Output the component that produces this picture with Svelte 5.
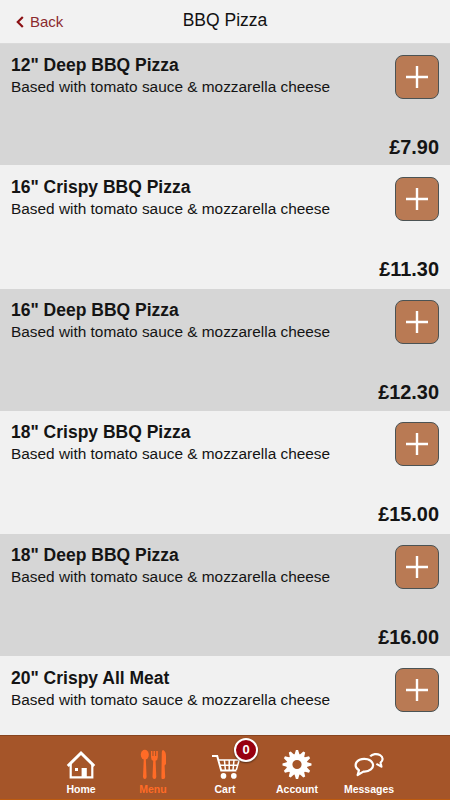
<script>
  const items = [
    { name: '12" Deep BBQ Pizza', price: "£7.90" },
    { name: '16" Crispy BBQ Pizza', price: "£11.30" },
    { name: '16" Deep BBQ Pizza', price: "£12.30" },
    { name: '18" Crispy BBQ Pizza', price: "£15.00" },
    { name: '18" Deep BBQ Pizza', price: "£16.00" },
    { name: '20" Crispy All Meat' },
  ];

  const description = "Based with tomato sauce & mozzarella cheese";

  const tabs = ["Home", "Menu", "Cart", "Account", "Messages"];
  const teeth = Array.from({ length: 12 }, (_, i) => i * 30);

  let active = "Menu";
  let cartCount = 0;
</script>

<div class="screen">
  <header>
    <button class="back">
      <svg width="8" height="12" viewBox="0 0 8 12">
        <path d="M6.8 1 L1.8 6 L6.8 11" fill="none" stroke="#8b1014" stroke-width="2.2" />
      </svg>
      <span>Back</span>
    </button>
    <h1>BBQ Pizza</h1>
  </header>

  <main>
    {#each items as item}
      <article>
        <div class="info">
          <h2>{item.name}</h2>
          <p>{description}</p>
        </div>
        <div class="buy">
          <button class="add" aria-label="Add">
            <svg width="42" height="42" viewBox="0 0 42 42">
              <path d="M10 21 H32 M21 10 V32" stroke="#fff" stroke-width="2.4" />
            </svg>
          </button>
          {#if item.price}
            <strong>{item.price}</strong>
          {/if}
        </div>
      </article>
    {/each}
  </main>

  <nav>
    {#each tabs as tab}
      <button class="tab" class:active={tab === active} on:click={() => (active = tab)}>
        <svg width="32" height="32" viewBox="0 0 32 32">
          {#if tab === "Home"}
            <path
              d="M2.8 17 L16 4 L29.2 17"
              fill="none"
              stroke="currentColor"
              stroke-width="3"
            />
            <path
              d="M5.7 14.5 V28.4 H27.3 V14.5"
              fill="none"
              stroke="currentColor"
              stroke-width="2.2"
            />
            <path d="M16.6 19 H21.8 V29 H16.6 Z M10 19 H13 V22 H10 Z" fill="currentColor" />
          {:else if tab === "Menu"}
            <g fill="currentColor">
              <ellipse cx="7.8" cy="5.8" rx="4" ry="5" />
              <path d="M6.8 9 H8.8 L9.6 28 Q9.4 30 7.8 30 Q6.2 30 6 28 Z" />
              <path d="M14 2 H15.4 V7 H16.5 V2 H18.1 V7 H19.2 V2 H20.8 V8.2 Q20.8 11 18.6 11.8 L19.3 28 Q19.2 30 17.4 30 Q15.6 30 15.5 28 L16.2 11.8 Q14 11 14 8.2 Z" />
              <path d="M25 30 Q24.4 30 24.4 28 L24.8 3 Q24.9 1 26.2 1 Q29 2.5 29 7 V15 L27.6 16.5 L28.2 28 Q28.2 30 26.4 30 Z" />
            </g>
          {:else if tab === "Cart"}
            <g fill="none" stroke="currentColor" stroke-width="1.5">
              <path d="M3 7 H8.2 L12.2 21.6 H27.4" stroke-width="2" />
              <path d="M9 11 H30.2 L27.3 21 M10.4 16.2 H28.7 M15.4 11 L16.4 21 M20.2 11 V21 M25 11 L24 21" />
            </g>
            <circle cx="14.5" cy="26.9" r="2.8" fill="currentColor" />
            <circle cx="24.8" cy="26.9" r="2.8" fill="currentColor" />
          {:else if tab === "Account"}
            <circle cx="16" cy="15.5" r="7.6" fill="none" stroke="currentColor" stroke-width="6" />
            {#each teeth as angle}
              <path
                d="M13.4 6 L14.9 1 H17.1 L18.6 6 Z"
                fill="currentColor"
                transform="rotate({angle} 16 15.5)"
              />
            {/each}
          {:else}
            <g fill="none" stroke="currentColor" stroke-width="2.2" stroke-linejoin="round">
              <path d="M6 21.3 A8.7 6.4 0 1 1 10.4 22.6 L4.6 26 Z" />
              <path d="M17.2 7.4 A6.7 5 0 1 1 27.6 13.6 L28.4 17.6 L23.4 14.9" />
            </g>
          {/if}
        </svg>
        {#if tab === "Cart"}
          <span class="badge">{cartCount}</span>
        {/if}
        <span class="label">{tab}</span>
      </button>
    {/each}
  </nav>
</div>

<style>
  :global(body) {
    margin: 0;
    font-family: "Liberation Sans", Arial, sans-serif;
  }

  .screen {
    width: 450px;
    height: 800px;
    display: flex;
    flex-direction: column;
    overflow: hidden;
    background: #f1f1f1;
    color: #141414;
  }

  button {
    appearance: none;
    border: 0;
    padding: 0;
    background: none;
    font-family: inherit;
    cursor: pointer;
  }

  svg {
    display: block;
  }

  header {
    flex: 0 0 43px;
    box-sizing: border-box;
    display: grid;
    grid-template-columns: 1fr auto 1fr;
    padding: 0 16px;
    border-bottom: 1px solid #dadada;
    background: #f2f2f2;
  }

  .back {
    display: flex;
    align-items: center;
    gap: 6px;
    height: 43px;
    font-size: 15px;
    color: #8b2a2e;
  }

  h1 {
    margin: 0;
    font-size: 17.5px;
    font-weight: 400;
    line-height: 40px;
    color: #111;
  }

  main {
    flex: 1 1 0;
    min-height: 0;
    overflow: hidden;
  }

  article {
    box-sizing: border-box;
    display: flex;
    justify-content: space-between;
    height: 123.8px;
    padding: 11.8px 11px 0;
    background: #f1f1f1;
  }

  article:nth-child(odd) {
    height: 121.4px;
    padding-top: 10.8px;
    background: #d6d6d6;
  }

  h2 {
    margin: 0;
    font-size: 17.5px;
    line-height: 21px;
    white-space: nowrap;
  }

  p {
    margin: 0;
    font-size: 15.4px;
    line-height: 22px;
    white-space: nowrap;
  }

  .buy {
    display: flex;
    flex-direction: column;
    align-items: flex-end;
  }

  .add {
    border: 1px solid #4b5354;
    border-radius: 8px;
    background: #b97a54;
  }

  strong {
    margin-top: 36px;
    font-size: 19.9px;
    line-height: 24px;
  }

  nav {
    flex: 0 0 65px;
    box-sizing: border-box;
    display: flex;
    justify-content: center;
    border-top: 1px solid #87441f;
    border-bottom: 1px solid #bd5b10;
    background: #a55529;
  }

  .tab {
    position: relative;
    width: 72px;
    display: flex;
    flex-direction: column;
    align-items: center;
    padding-top: 13px;
    color: #fff;
  }

  .tab.active {
    color: #ff6b26;
  }

  .label {
    margin-top: 1px;
    font-size: 10.5px;
    font-weight: 700;
    line-height: 14px;
  }

  .badge {
    position: absolute;
    top: 2px;
    left: 45px;
    box-sizing: border-box;
    width: 24px;
    height: 24px;
    border: 2px solid #fff;
    border-radius: 50%;
    background: #980010;
    box-shadow: 0 1px 2px rgba(0, 0, 0, 0.5);
    font-size: 13px;
    font-weight: 700;
    line-height: 20px;
    text-align: center;
  }
</style>
